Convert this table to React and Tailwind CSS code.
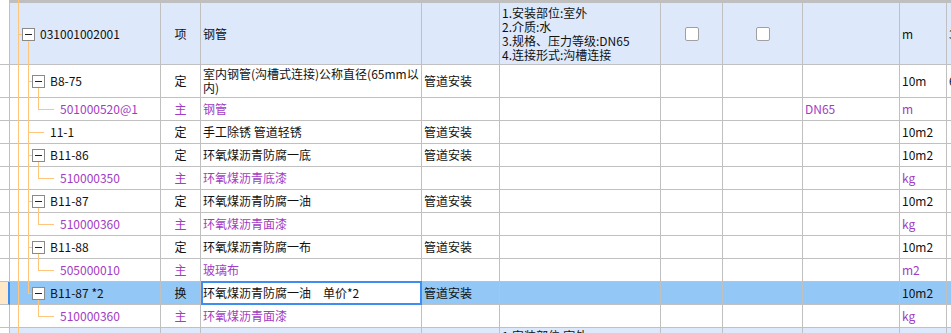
import React from 'react'

const COLS = 'grid grid-cols-[10px_151px_40px_221px_78px_161px_62px_80px_97px_47px_1fr]'
const LINE = 'bg-[#ffc57a]'
const PURPLE = 'text-[#a23cc3]'

const rows = [
  { kind: 'root', code: '031001002001', type: '项', name: '钢管', unit: 'm', extra: '3', head: true, checks: true, h: 'h-[62px]',
    spec: ['1.安装部位:室外', '2.介质:水', '3.规格、压力等级:DN65', '4.连接形式:沟槽连接'] },
  { kind: 'item', code: 'B8-75', type: '定', name: '室内钢管(沟槽式连接)公称直径(65mm以内)', major: '管道安装', unit: '10m', extra: '6', h: 'h-[33px]', wrap: true },
  { kind: 'leaf', code: '501000520@1', type: '主', name: '钢管', dn: 'DN65', unit: 'm', mat: true },
  { kind: 'plain', code: '11-1', type: '定', name: '手工除锈 管道轻锈', major: '管道安装', unit: '10m2' },
  { kind: 'item', code: 'B11-86', type: '定', name: '环氧煤沥青防腐一底', major: '管道安装', unit: '10m2' },
  { kind: 'leaf', code: '510000350', type: '主', name: '环氧煤沥青底漆', unit: 'kg', mat: true },
  { kind: 'item', code: 'B11-87', type: '定', name: '环氧煤沥青防腐一油', major: '管道安装', unit: '10m2' },
  { kind: 'leaf', code: '510000360', type: '主', name: '环氧煤沥青面漆', unit: 'kg', mat: true },
  { kind: 'item', code: 'B11-88', type: '定', name: '环氧煤沥青防腐一布', major: '管道安装', unit: '10m2' },
  { kind: 'leaf', code: '505000010', type: '主', name: '玻璃布', unit: 'm2', mat: true },
  { kind: 'item', last: true, code: 'B11-87 *2', type: '换', name: '环氧煤沥青防腐一油　单价*2', major: '管道安装', unit: '10m2', selected: true },
  { kind: 'leaf', after: true, code: '510000360', type: '主', name: '环氧煤沥青面漆', unit: 'kg', mat: true },
  { kind: 'next', head: true, h: 'h-[40px]', spec: ['1.安装部位:室外'] },
]

function Box({ left }) {
  return (
    <div className={`absolute ${left} top-[calc(50%-6px)] w-[13px] h-[13px] border border-[#8a8a8a] bg-white flex items-center justify-center`}>
      <div className="w-[7px] h-px bg-[#222]" />
    </div>
  )
}

function Tree({ r }) {
  const k = r.kind
  if (k === 'next') return null
  if (k === 'root') {
    return (
      <>
        <div className={`absolute left-[8px] top-1/2 w-[4px] h-px ${LINE}`} />
        <div className={`absolute left-[18px] top-[calc(50%+7px)] bottom-[-1px] w-px ${LINE}`} />
        <Box left="left-[12px]" />
      </>
    )
  }
  const v28 = r.after ? null : r.last
    ? <div className={`absolute left-[18px] top-0 h-[calc(50%+1px)] w-px ${LINE}`} />
    : <div className={`absolute left-[18px] top-0 bottom-[-1px] w-px ${LINE}`} />
  if (k === 'item') {
    return (
      <>
        {v28}
        <div className={`absolute left-[18px] top-1/2 w-[4px] h-px ${LINE}`} />
        <div className={`absolute left-[28px] top-[calc(50%+7px)] bottom-[-1px] w-px ${LINE}`} />
        <Box left="left-[22px]" />
      </>
    )
  }
  if (k === 'plain') {
    return (
      <>
        {v28}
        <div className={`absolute left-[18px] top-1/2 w-[16px] h-px ${LINE}`} />
      </>
    )
  }
  return (
    <>
      {v28}
      <div className={`absolute left-[28px] top-0 h-[calc(50%+1px)] w-px ${LINE}`} />
      <div className={`absolute left-[28px] top-1/2 w-[16px] h-px ${LINE}`} />
    </>
  )
}

function Check() {
  return <div className="w-[14px] h-[14px] rounded-[2px] border border-[#a0a0a0] bg-white" />
}

function Row({ r }) {
  const base = 'relative border-r border-b border-[#c0c0c0] flex px-[2px] overflow-hidden'
  const cell = `${base} items-center whitespace-nowrap`
  const h = r.h || 'h-[23px]'
  const bg = r.selected ? 'bg-[#93c8f6]' : r.head ? 'bg-[#dde9fb]' : 'bg-white'
  const tc = r.mat ? PURPLE : 'text-[#111]'
  const pad = { root: 'pl-[30px]', item: 'pl-[40px]', plain: 'pl-[40px]', leaf: 'pl-[50px]', next: '' }[r.kind]
  const nameCls = r.wrap
    ? `${base} items-start pt-[2px] break-all bg-white`
    : `${cell} ${r.selected ? 'bg-white overflow-visible' : bg}`
  return (
    <div className={`${COLS} ${h} ${tc}`}>
      <div className={r.selected
        ? 'border-b border-[#c0c0c0] border-r-2 border-r-[#3d8ef0] bg-[#ffe8c8]'
        : 'border-b border-r border-[#c0c0c0] bg-white'} />
      <div className={`relative border-r border-b border-[#c0c0c0] flex items-center ${pad} ${bg} whitespace-nowrap`}>
        <Tree r={r} />
        <span>{r.code}</span>
      </div>
      <div className={`${cell} ${bg} justify-center`}>{r.type}</div>
      <div className={nameCls}>
        <span>{r.name}</span>
        {r.selected && (
          <div className="absolute left-0 top-[-1px] right-[-1px] bottom-[-1px] border-2 border-[#3d8ef0]" />
        )}
      </div>
      <div className={`${cell} ${bg}`}>{r.major}</div>
      <div className={`${cell} ${bg} ${r.kind === 'next' ? '!items-start pt-[1px]' : ''}`}>
        {r.spec && (
          <div className="flex flex-col">
            {r.spec.map((s) => <div key={s} className="h-[14px] leading-[14px]">{s}</div>)}
          </div>
        )}
      </div>
      <div className={`${cell} ${bg} justify-center`}>{r.checks && <Check />}</div>
      <div className={`${cell} ${bg} justify-center`}>{r.checks && <Check />}</div>
      <div className={`${cell} ${bg}`}>{r.dn}</div>
      <div className={`${cell} ${bg}`}>{r.unit}</div>
      <div className={`${cell} ${bg}`}>{r.extra}</div>
    </div>
  )
}

export default function App() {
  return (
    <div className="relative w-[951px] h-[333px] overflow-hidden bg-white font-['Noto_Sans_CJK_SC',sans-serif] text-[12px] leading-[14px]">
      <div className="flex h-[3px]">
        <div className="w-[9px] bg-white" />
        <div className="flex-1 bg-[#bfbfbf]" />
      </div>
      {rows.map((r, i) => <Row key={i} r={r} />)}
      <div className={`absolute left-[18px] top-0 bottom-0 w-px ${LINE}`} />
    </div>
  )
}
